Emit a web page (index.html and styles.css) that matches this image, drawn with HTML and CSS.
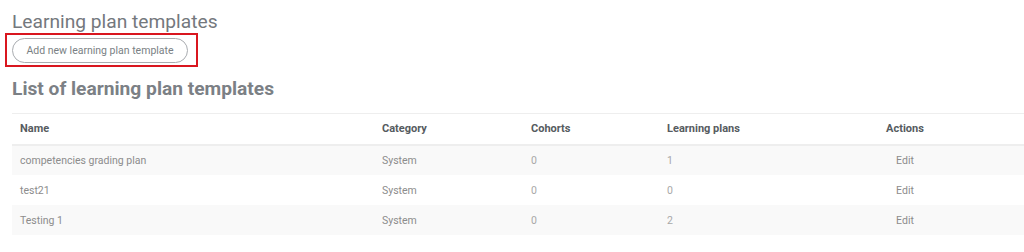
FILE: index.html
```html
<!DOCTYPE html>
<html lang="en">
<head>
  <meta charset="utf-8">
  <meta name="viewport" content="width=device-width">
  <title>Learning plan templates</title>
  <link rel="stylesheet" href="styles.css">
</head>
<body>
  <div class="page">
    <h2 class="title">Learning plan templates</h2>
    <div class="highlight">
      <button class="add-btn">Add new learning plan template</button>
    </div>
    <h3 class="list-title">List of learning plan templates</h3>

    <table class="plans">
      <thead>
        <tr>
          <th class="col-name">Name</th>
          <th class="col-cat">Category</th>
          <th class="col-coh">Cohorts</th>
          <th class="col-lp">Learning plans</th>
          <th class="col-act">Actions</th>
        </tr>
      </thead>
      <tbody>
        <tr>
          <td>competencies grading plan</td>
          <td>System</td>
          <td class="num">0</td>
          <td class="num">1</td>
          <td class="act">Edit</td>
        </tr>
        <tr>
          <td>test21</td>
          <td>System</td>
          <td class="num">0</td>
          <td class="num">0</td>
          <td class="act">Edit</td>
        </tr>
        <tr>
          <td>Testing 1</td>
          <td>System</td>
          <td class="num">0</td>
          <td class="num">2</td>
          <td class="act">Edit</td>
        </tr>
      </tbody>
    </table>
  </div>
</body>
</html>
```

FILE: styles.css
```css
* {
  box-sizing: border-box;
}
body {
  margin: 0;
  padding: 0;
  background-color: #ffffff;
  font-family: Roboto, "Liberation Sans", sans-serif;
  color: #757575;
}

.page {
  padding: 11px 0 0 12px;
}

.title {
  margin: 0;
  font-size: 19.2px;
  font-weight: 400;
  line-height: 22px;
  color: #74787d;
}

.highlight {
  display: inline-block;
  margin: 0 0 0 -7px;
  padding: 3px 8px 2px 5px;
  border: 2px solid #d9161f;
}

.add-btn {
  display: block;
  width: 176px;
  height: 25px;
  padding: 0;
  border: 1px solid #a9acb0;
  border-radius: 13px;
  background: #ffffff;
  font-family: Roboto, "Liberation Sans", sans-serif;
  font-size: 10.5px;
  color: #7a7f84;
}

.list-title {
  margin: 11px 0 0 0;
  font-size: 19.2px;
  font-weight: 700;
  line-height: 22px;
  color: #7b8085;
}

.plans {
  width: 1012px;
  margin-top: 13px;
  border-collapse: collapse;
  font-size: 10.5px;
}

.plans th {
  height: 31px;
  padding: 0 8px;
  text-align: left;
  font-size: 11px;
  font-weight: 700;
  color: #565b60;
  border-top: 1px solid #eeeeee;
  border-bottom: 2px solid #eeeeee;
}

.plans td {
  height: 30px;
  padding: 1px 8px 0 8px;
  color: #8c8c8c;
}

.plans td.num {
  color: #a8a8a8;
}

.plans tbody tr:nth-child(odd) {
  background-color: #f9f9f9;
}

.col-name { width: 362px; }
.col-cat { width: 149px; }
.col-coh { width: 136px; }
.col-lp { width: 127px; }

.plans .col-act,
.plans .act {
  text-align: center;
}
```
